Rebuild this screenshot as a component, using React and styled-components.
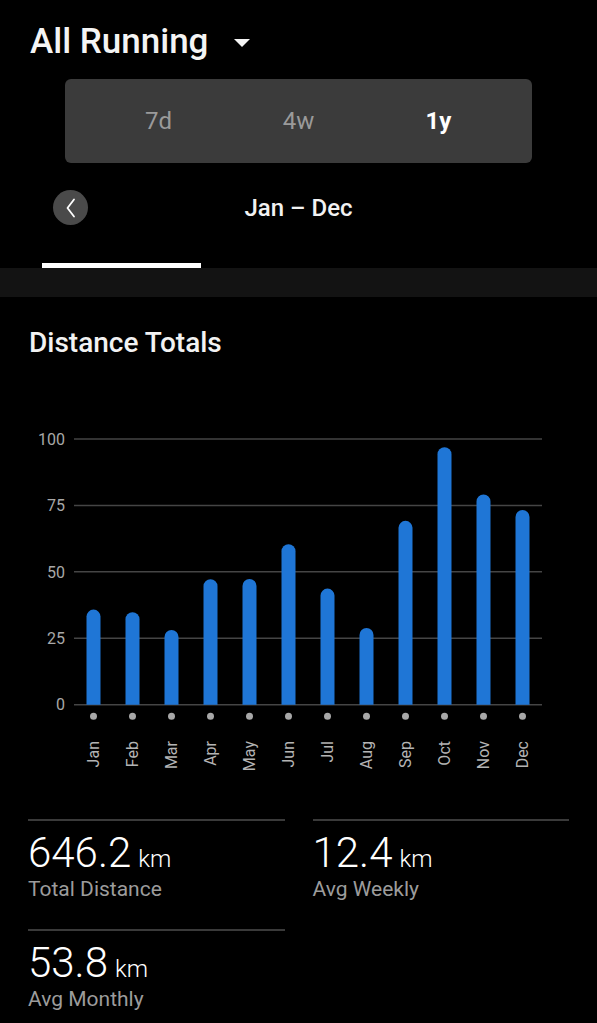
import styled, { createGlobalStyle } from 'styled-components'

const GlobalStyle = createGlobalStyle`
  html, body {
    margin: 0;
    padding: 0;
    background: #000;
  }
  body {
    font-family: Roboto, 'Liberation Sans', sans-serif;
    color: #fff;
  }
`

const Page = styled.div`
  width: 597px;
  min-height: 1023px;
  background: #000;
`

const TitleRow = styled.div`
  display: flex;
  align-items: center;
  gap: 26px;
  margin: 22px 0 0 30px;
  height: 40px;

  h1 {
    margin: 0;
    font-size: 35px;
    line-height: 40px;
    font-weight: 500;
    color: #f4f4f4;
  }
`

const Caret = styled.span`
  width: 0;
  height: 0;
  border-left: 8.5px solid transparent;
  border-right: 8.5px solid transparent;
  border-top: 8px solid #f4f4f4;
  margin-top: 1px;
`

const Segmented = styled.div`
  display: flex;
  justify-content: center;
  margin: 17px 0 0 65px;
  width: 467px;
  height: 84px;
  border-radius: 6px;
  background: #3b3b3b;
`

const Segment = styled.button`
  width: 140px;
  border: 0;
  background: none;
  padding: 0;
  font-family: inherit;
  font-size: 24px;
  font-weight: ${({ $active }) => ($active ? 700 : 400)};
  color: ${({ $active }) => ($active ? '#fff' : '#9a9a9a')};
`

const PeriodRow = styled.div`
  display: grid;
  grid-template-columns: 1fr auto 1fr;
  align-items: center;
  margin-top: 27px;
  padding: 0 53px;
  height: 35px;

  span {
    font-size: 24px;
    font-weight: 500;
    color: #f2f2f2;
  }
`

const RoundButton = styled.button`
  width: 35px;
  height: 35px;
  border-radius: 50%;
  border: 0;
  padding: 0;
  background: #4a4a4a;
  display: flex;
  align-items: center;
  justify-content: center;
`

const TabStrip = styled.div`
  margin-top: 38px;
  display: flex;
  flex-direction: column;

  .indicator {
    margin-left: 42px;
    width: 159px;
    height: 5px;
    background: #fff;
  }
  .band {
    height: 29px;
    background: #131313;
  }
`

const SectionTitle = styled.h2`
  margin: 30px 0 0 29px;
  font-size: 28px;
  line-height: 32px;
  font-weight: 500;
  color: #f2f2f2;
`

const ChartBox = styled.div`
  margin-top: 62px;
  height: 352px;

  svg {
    display: block;
  }
`

const Stats = styled.div`
  display: grid;
  grid-template-columns: 1fr 1fr;
  column-gap: 28px;
  row-gap: 28px;
  padding: 0 28px;
  margin-top: 46px;
`

const Stat = styled.div`
  border-top: 2px solid #3a3a3a;
  padding-top: 9px;
`

const Value = styled.div`
  display: flex;
  align-items: baseline;
  height: 46px;
  font-size: 42px;
  line-height: 46px;
  font-weight: 300;
  color: #fff;

  small {
    font-size: 24px;
    margin-left: 7px;
  }
`

const Label = styled.div`
  margin-top: 1px;
  font-size: 21px;
  line-height: 24px;
  color: #9c9c9c;
`

const months = ['Jan', 'Feb', 'Mar', 'Apr', 'May', 'Jun', 'Jul', 'Aug', 'Sep', 'Oct', 'Nov', 'Dec']
const distances = [35.8, 34.8, 28.1, 47.2, 47.3, 60.4, 43.7, 28.9, 69.2, 96.9, 79.1, 73.3]

const stats = [
  { value: '646.2', label: 'Total Distance' },
  { value: '12.4', label: 'Avg Weekly' },
  { value: '53.8', label: 'Avg Monthly' },
]

function BarChart() {
  const zero = 283.7
  const scale = 2.657
  const left = 74
  const step = 39
  const barW = 14
  const r = barW / 2

  return (
    <svg width="597" height="352" viewBox="0 0 597 352">
      {[0, 25, 50, 75, 100].map((t) => {
        const y = zero - t * scale
        return (
          <g key={t}>
            <line x1={left} x2={542} y1={y} y2={y} stroke="#454545" strokeWidth="1.5" />
            <text
              x="65"
              y={y + 5.7}
              textAnchor="end"
              fontSize="16"
              fontFamily="Roboto, sans-serif"
              fill="#a8a8a8"
            >
              {t}
            </text>
          </g>
        )
      })}
      {distances.map((d, i) => {
        const cx = left + step / 2 + i * step
        const top = zero - d * scale
        const x0 = cx - r
        const x1 = cx + r
        return (
          <g key={months[i]}>
            <path
              d={`M${x0},${zero} V${top + r} A${r},${r} 0 0 1 ${x1},${top + r} V${zero} Z`}
              fill="#1f76d6"
            />
            <circle cx={cx} cy="295.3" r="3.5" fill="#a8a8a8" />
            <text
              transform={`translate(${cx + 5.8}, 320) rotate(-90)`}
              textAnchor="end"
              fontSize="16"
              fontFamily="Roboto, sans-serif"
              fill="#b4b4b4"
            >
              {months[i]}
            </text>
          </g>
        )
      })}
    </svg>
  )
}

export default function App() {
  return (
    <Page>
      <GlobalStyle />
      <TitleRow>
        <h1>All Running</h1>
        <Caret />
      </TitleRow>
      <Segmented>
        <Segment>7d</Segment>
        <Segment>4w</Segment>
        <Segment $active>1y</Segment>
      </Segmented>
      <PeriodRow>
        <RoundButton aria-label="Previous">
          <svg width="14" height="20" viewBox="0 0 14 20">
            <path d="M10 1.5 L3.5 10 L10 18.5" fill="none" stroke="#fff" strokeWidth="1.8" strokeLinecap="round" strokeLinejoin="round" />
          </svg>
        </RoundButton>
        <span>Jan – Dec</span>
        <div />
      </PeriodRow>
      <TabStrip>
        <div className="indicator" />
        <div className="band" />
      </TabStrip>
      <SectionTitle>Distance Totals</SectionTitle>
      <ChartBox>
        <BarChart />
      </ChartBox>
      <Stats>
        {stats.map((s) => (
          <Stat key={s.label}>
            <Value>
              {s.value}
              <small>km</small>
            </Value>
            <Label>{s.label}</Label>
          </Stat>
        ))}
      </Stats>
    </Page>
  )
}
